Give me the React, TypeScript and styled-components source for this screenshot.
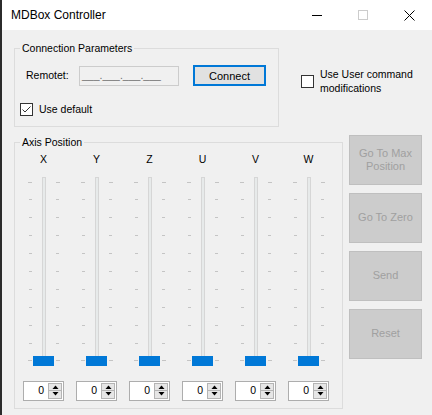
import React from 'react'
import styled, { createGlobalStyle } from 'styled-components'

const GlobalStyle = createGlobalStyle`
  html, body {
    margin: 0;
    padding: 0;
    background: #f0f0f0;
  }
  body {
    font-family: "Liberation Sans", Arial, sans-serif;
    font-size: 10.5px;
    color: #000;
  }
`

const Window = styled.div`
  width: 432px;
  height: 415px;
  box-sizing: border-box;
  border-left: 2px solid #2b2b2b;
  background: #f0f0f0;
  display: flex;
  flex-direction: column;
  overflow: hidden;
`

const TitleBar = styled.div`
  height: 30px;
  flex-shrink: 0;
  background: #fff;
  display: flex;
  align-items: center;
`

const Title = styled.div`
  flex: 1;
  padding-left: 9px;
  font-size: 12px;
`

const CaptionButton = styled.div`
  width: 46px;
  height: 30px;
  display: flex;
  align-items: center;
  justify-content: center;
`

const Body = styled.div`
  display: flex;
  flex-direction: column;
  gap: 8px;
  padding: 12px 0 0 12px;
`

const Row = styled.div`
  display: flex;
  align-items: flex-start;
`

const Group = styled.fieldset<{ $width: number; $top?: number }>`
  margin: ${p => p.$top || 0}px 0 0 0;
  padding: 0;
  min-width: 0;
  width: ${p => p.$width}px;
  box-sizing: border-box;
  border: 1px solid #dcdcdc;
`

const Legend = styled.legend`
  margin-left: 5px;
  padding: 0 2px;
  line-height: 13px;
`

const ConnectionBody = styled.div`
  display: flex;
  flex-direction: column;
  gap: 17px;
  padding: 10px 0 9px 5px;
`

const FieldRow = styled.div`
  display: flex;
  align-items: center;
`

const FieldLabel = styled.span`
  width: 53px;
  margin-left: 6px;
  line-height: 13px;
`

const MaskedBox = styled.div`
  width: 100px;
  height: 20px;
  box-sizing: border-box;
  border: 1px solid #cccccc;
  background: #f0f0f0;
  color: #6d6d6d;
  padding-left: 2px;
  line-height: 17px;
  white-space: nowrap;
`

const ConnectButton = styled.button`
  width: 73px;
  height: 21px;
  margin-left: 14px;
  box-sizing: border-box;
  border: 2px solid #0078d7;
  background: #e1e1e1;
  font: 11px "Liberation Sans", Arial, sans-serif;
  color: #000;
  padding: 0;
`

const CheckRow = styled.label<{ $left?: number; $top?: number }>`
  display: flex;
  align-items: center;
  gap: 6px;
  margin: ${p => p.$top || 0}px 0 0 ${p => p.$left || 0}px;
  line-height: 13.5px;
`

const Box = styled.span`
  width: 13px;
  height: 13px;
  box-sizing: border-box;
  border: 1px solid #333;
  background: #fff;
  display: flex;
  flex-shrink: 0;
`

const AxisColumns = styled.div`
  display: flex;
  padding: 4px 0 7px 3px;
`

const AxisColumn = styled.div`
  width: 53px;
  display: flex;
  flex-direction: column;
`

const AxisLabel = styled.div`
  line-height: 13px;
  text-align: center;
  padding-right: 2px;
  margin-bottom: 11px;
`

const Slider = styled.div`
  height: 189px;
  display: flex;
  gap: 10px;
  padding-left: 10px;
`

const Ticks = styled.div<{ $side: 'left' | 'right' }>`
  width: 4px;
  box-sizing: border-box;
  padding: 5px 0 4px;
  display: flex;
  flex-direction: column;
  justify-content: space-between;
  align-items: ${p => (p.$side === 'left' ? 'flex-end' : 'flex-start')};
`

const Tick = styled.div<{ $long: boolean }>`
  height: 1px;
  width: ${p => (p.$long ? 4 : 3)}px;
  background: #c4c4c4;
`

const Track = styled.div`
  width: 4px;
  box-sizing: border-box;
  border: 1px solid #d6d6d6;
  background: #e7eaea;
  position: relative;
`

const Thumb = styled.div`
  position: absolute;
  left: -10px;
  bottom: -1px;
  width: 21px;
  height: 10px;
  background: #0078d7;
`

const Spin = styled.div`
  width: 41px;
  height: 20px;
  margin: 15px 0 0 5px;
  box-sizing: border-box;
  border: 1px solid #adadad;
  background: #fff;
  display: flex;
  align-items: center;
`

const SpinValue = styled.div`
  flex: 1;
  text-align: right;
  padding-right: 4px;
  line-height: 13px;
`

const SpinButtons = styled.div`
  width: 14px;
  height: 16px;
  margin-right: 1px;
  box-sizing: border-box;
  border: 1px solid #b4b4b4;
  display: flex;
  flex-direction: column;
`

const SpinButton = styled.div<{ $down?: boolean }>`
  flex: 1;
  background: #e6e6e6;
  display: flex;
  align-items: center;
  justify-content: center;
  border-top: ${p => (p.$down ? '1px solid #b4b4b4' : 'none')};
`

const SideButtons = styled.div`
  display: flex;
  flex-direction: column;
  gap: 8px;
  margin-left: 6px;
`

const DisabledButton = styled.button`
  width: 73px;
  height: 50px;
  box-sizing: border-box;
  border: 1px solid #bfbfbf;
  background: #cccccc;
  color: #a0a0a0;
  font: 11px "Liberation Sans", Arial, sans-serif;
  line-height: 13px;
  padding: 0 4px;
`

const Check = ({ checked }: { checked: boolean }) => (
  <Box>
    {checked && (
      <svg width="11" height="11" viewBox="0 0 11 11">
        <path d="M1.5 5.5 L4 8 L9.5 2.5" fill="none" stroke="#333" strokeWidth="1" />
      </svg>
    )}
  </Box>
)

const Arrow = ({ down }: { down?: boolean }) => (
  <svg width="7" height="4" viewBox="0 0 7 4">
    <path d={down ? 'M0.5 0 L6.5 0 L3.5 3.5 Z' : 'M0.5 4 L6.5 4 L3.5 0.5 Z'} fill="#000" />
  </svg>
)

const axes = ['X', 'Y', 'Z', 'U', 'V', 'W']
const ticks = Array.from({ length: 11 }, (_, i) => i)

const AxisSlider = ({ name }: { name: string }) => (
  <AxisColumn>
    <AxisLabel>{name}</AxisLabel>
    <Slider>
      <Ticks $side="left">
        {ticks.map(i => (
          <Tick key={i} $long={i === 0 || i === 10} />
        ))}
      </Ticks>
      <Track>
        <Thumb />
      </Track>
      <Ticks $side="right">
        {ticks.map(i => (
          <Tick key={i} $long={i === 0 || i === 10} />
        ))}
      </Ticks>
    </Slider>
    <Spin>
      <SpinValue>0</SpinValue>
      <SpinButtons>
        <SpinButton>
          <Arrow />
        </SpinButton>
        <SpinButton $down>
          <Arrow down />
        </SpinButton>
      </SpinButtons>
    </Spin>
  </AxisColumn>
)

export default function App() {
  return (
    <>
      <GlobalStyle />
      <Window>
        <TitleBar>
          <Title>MDBox Controller</Title>
          <CaptionButton>
            <svg width="10" height="10" viewBox="0 0 10 10">
              <path d="M0 5.5 H10" stroke="#000" strokeWidth="1" />
            </svg>
          </CaptionButton>
          <CaptionButton>
            <svg width="10" height="10" viewBox="0 0 10 10">
              <rect x="0.5" y="0.5" width="9" height="9" fill="none" stroke="#cccccc" strokeWidth="1" />
            </svg>
          </CaptionButton>
          <CaptionButton>
            <svg width="11" height="11" viewBox="0 0 11 11">
              <path d="M0.5 0.5 L10.5 10.5 M10.5 0.5 L0.5 10.5" stroke="#000" strokeWidth="1" />
            </svg>
          </CaptionButton>
        </TitleBar>

        <Body>
          <Row>
            <Group $width={265}>
              <Legend>Connection Parameters</Legend>
              <ConnectionBody>
                <FieldRow>
                  <FieldLabel>Remotet:</FieldLabel>
                  <MaskedBox>___.___.___.___</MaskedBox>
                  <ConnectButton>Connect</ConnectButton>
                </FieldRow>
                <CheckRow>
                  <Check checked />
                  <span>Use default</span>
                </CheckRow>
              </ConnectionBody>
            </Group>
            <CheckRow $left={22} $top={26}>
              <Check checked={false} />
              <span>
                Use User command
                <br />
                modifications
              </span>
            </CheckRow>
          </Row>

          <Row>
            <Group $width={329} $top={1}>
              <Legend>Axis Position</Legend>
              <AxisColumns>
                {axes.map(a => (
                  <AxisSlider key={a} name={a} />
                ))}
              </AxisColumns>
            </Group>
            <SideButtons>
              <DisabledButton disabled>Go To Max Position</DisabledButton>
              <DisabledButton disabled>Go To Zero</DisabledButton>
              <DisabledButton disabled>Send</DisabledButton>
              <DisabledButton disabled>Reset</DisabledButton>
            </SideButtons>
          </Row>
        </Body>
      </Window>
    </>
  )
}
